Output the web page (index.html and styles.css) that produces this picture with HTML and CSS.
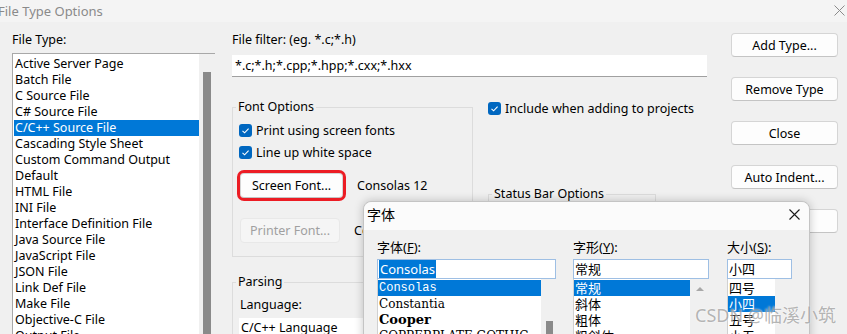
FILE: index.html
```html
<!DOCTYPE html>
<html lang="en">

<head>
    <meta charset="UTF-8">
    <title>File Type Options</title>
    <link rel="stylesheet" href="styles.css">
</head>

<body>
    <div class="window">
        <div class="titlebar">
            <span class="title">File Type Options</span>
            <svg class="close" width="11" height="11" viewBox="0 0 11 11"><path d="M0.5 0.5 L10.5 10.5 M10.5 0.5 L0.5 10.5" stroke="#8a8a8a" stroke-width="1"/></svg>
        </div>

        <div class="content">
            <div class="col-types">
                <div class="label">File Type:</div>
                <div class="listbox">
                    <ul class="items">
                        <li>Active Server Page</li>
                        <li>Batch File</li>
                        <li>C Source File</li>
                        <li>C# Source File</li>
                        <li class="selected">C/C++ Source File</li>
                        <li>Cascading Style Sheet</li>
                        <li>Custom Command Output</li>
                        <li>Default</li>
                        <li>HTML File</li>
                        <li>INI File</li>
                        <li>Interface Definition File</li>
                        <li>Java Source File</li>
                        <li>JavaScript File</li>
                        <li>JSON File</li>
                        <li>Link Def File</li>
                        <li>Make File</li>
                        <li>Objective-C File</li>
                        <li>Output File</li>
                    </ul>
                    <div class="vscroll"><div class="thumb"></div></div>
                </div>
            </div>

            <div class="col-main">
                <div class="label">File filter: (eg. *.c;*.h)</div>
                <div class="textbox">*.c;*.h;*.cpp;*.hpp;*.cxx;*.hxx</div>

                <div class="main-row">
                    <div class="left-groups">
                        <fieldset class="group font-opts">
                            <legend>Font Options</legend>
                            <div class="check"><span class="box"></span>Print using screen fonts</div>
                            <div class="check"><span class="box"></span>Line up white space</div>
                            <div class="font-row first">
                                <button class="btn marked">Screen Font...</button>
                                <span>Consolas 12</span>
                            </div>
                            <div class="font-row">
                                <button class="btn" disabled>Printer Font...</button>
                                <span>Courier New 10</span>
                            </div>
                        </fieldset>

                        <fieldset class="group parsing">
                            <legend>Parsing</legend>
                            <div class="label">Language:</div>
                            <div class="combo">C/C++ Language</div>
                        </fieldset>
                    </div>

                    <div class="right-opts">
                        <div class="check"><span class="box"></span>Include when adding to projects</div>
                        <fieldset class="group status">
                            <legend>Status Bar Options</legend>
                        </fieldset>
                    </div>
                </div>
            </div>

            <div class="col-buttons">
                <button class="btn">Add Type...</button>
                <button class="btn">Remove Type</button>
                <button class="btn">Close</button>
                <button class="btn">Auto Indent...</button>
                <button class="btn">Indent...</button>
            </div>
        </div>

        <div class="font-dialog">
            <div class="dlg-title">
                <span>字体</span>
                <svg class="dlg-close" width="11" height="11" viewBox="0 0 11 11"><path d="M0.5 0.5 L10.5 10.5 M10.5 0.5 L0.5 10.5" stroke="#1a1a1a" stroke-width="1.1"/></svg>
            </div>
            <div class="dlg-body">
                <div class="dlg-col face">
                    <div class="dlg-label">字体(<u>F</u>):</div>
                    <div class="dlg-input"><span class="sel-text">Consolas</span></div>
                    <div class="dlg-list">
                        <ul>
                            <li class="selected mono">Consolas</li>
                            <li class="serif">Constantia</li>
                            <li class="heavy">Cooper</li>
                            <li class="serif caps">COPPERPLATE GOTHIC</li>
                        </ul>
                        <div class="dlg-scroll"><div class="dlg-thumb"></div></div>
                    </div>
                </div>
                <div class="dlg-col style">
                    <div class="dlg-label">字形(<u>Y</u>):</div>
                    <div class="dlg-input">常规</div>
                    <div class="dlg-list">
                        <ul>
                            <li class="selected">常规</li>
                            <li>斜体</li>
                            <li>粗体</li>
                            <li>粗斜体</li>
                        </ul>
                        <div class="dlg-scroll"><span class="arrow-up"></span></div>
                    </div>
                </div>
                <div class="dlg-col size">
                    <div class="dlg-label">大小(<u>S</u>):</div>
                    <div class="dlg-input">小四</div>
                    <div class="dlg-list">
                        <ul>
                            <li>四号</li>
                            <li class="selected">小四</li>
                            <li>五号</li>
                            <li>小五</li>
                        </ul>
                        <div class="dlg-scroll"></div>
                    </div>
                </div>
            </div>
        </div>

        <div class="watermark">CSDN @临溪小筑</div>
    </div>
</body>

</html>
```

FILE: styles.css
```css
body {
    margin: 0;
    padding: 0;
    font-family: "Noto Sans", "Noto Sans CJK SC", sans-serif;
    font-size: 12.5px;
    color: #000;
    background: #f0f0f0;
}

.window {
    position: relative;
    width: 847px;
    height: 334px;
    overflow: hidden;
    background: #f0f0f0;
}

/* title bar */

.titlebar {
    height: 22px;
    background: #f4f4f4;
    display: flex;
    align-items: center;
    justify-content: space-between;
}

.titlebar .title {
    margin-left: -2px;
    color: #8a8a8a;
    font-size: 13px;
}

.titlebar .close {
    margin-right: 2px;
    margin-top: -2px;
}

/* main layout */

.content {
    display: flex;
    padding: 10px 9px 0 12px;
}

.label {
    height: 16px;
    line-height: 16px;
}

.col-types {
    width: 203px;
}

.listbox {
    margin-top: 5px;
    height: 290px;
    display: flex;
    background: #fff;
    border: 1px solid #a8a8a8;
    border-right: none;
}

.items {
    list-style: none;
    margin: 2px 0 0 1px;
    padding: 0;
    width: 185px;
}

.items li {
    height: 16px;
    line-height: 16px;
    padding-left: 1px;
    white-space: nowrap;
}

.items li.selected {
    background: #0078d7;
    color: #fff;
}

.vscroll {
    flex: 1;
    background: #f0f0f0;
    padding: 18px 0 0 4px;
}

.vscroll .thumb {
    width: 8px;
    height: 100%;
    background: #8a8a8a;
}

.col-main {
    width: 475px;
    margin-left: 17px;
}

.textbox {
    margin-top: 7px;
    height: 21px;
    line-height: 21px;
    padding-left: 3px;
    background: #fff;
    border-bottom: 1px solid #a0a0a0;
}

.main-row {
    display: flex;
    margin-top: 22px;
}

.left-groups {
    width: 241px;
}

.group {
    margin: 0;
    padding: 0 6px;
    border: 1px solid #dcdcdc;
    min-width: 0;
}

.group legend {
    padding: 0 2px;
    margin-left: -3px;
    line-height: 16px;
}

.font-opts {
    height: 156px;
}

.check {
    display: flex;
    align-items: center;
    height: 22px;
    white-space: nowrap;
}

.check .box {
    width: 13px;
    height: 13px;
    margin-right: 4px;
    border-radius: 3px;
    background: #0067c0 url("data:image/svg+xml,%3Csvg xmlns='http://www.w3.org/2000/svg' width='13' height='13'%3E%3Cpath d='M3.5 6.8 L5.6 8.8 L9.6 4.6' fill='none' stroke='white' stroke-width='1.1'/%3E%3C/svg%3E");
}

.font-opts .check:first-of-type {
    margin-top: 4px;
}

.font-row {
    display: flex;
    align-items: center;
    margin-top: 20px;
    white-space: nowrap;
}

.font-row.first {
    margin-top: 10px;
}

.font-row span {
    margin-left: 14px;
}

.btn {
    font-family: inherit;
    font-size: 12.5px;
    color: #000;
    background: #fdfdfd;
    border: 1px solid #d5d5d5;
    border-bottom-color: #c4c4c4;
    border-radius: 4px;
    padding: 0;
}

.font-row .btn {
    width: 100px;
    height: 25px;
    margin-left: 1px;
}

.btn:disabled {
    color: #a0a0a0;
    background: #f5f5f5;
    border-color: #e8e8e8;
}

.btn.marked {
    outline: 3px solid #ec1c24;
    outline-offset: 0;
    width: 103px;
    border-radius: 4px;
}

.parsing {
    margin-top: 17px;
    height: 80px;
    width: 300px;
}

.parsing .label {
    margin-top: 7px;
    padding-left: 1px;
}

.parsing .combo {
    margin-top: 5px;
    height: 20px;
    line-height: 20px;
    padding-left: 2px;
    background: #fff;
}

.right-opts {
    margin-left: 15px;
    flex: 1;
}

.right-opts .check {
    height: 18px;
}

.status {
    margin-top: 69px;
    width: 154px;
    height: 80px;
}

.col-buttons {
    width: 107px;
    margin-left: 24px;
    padding-top: 1px;
    display: flex;
    flex-direction: column;
    gap: 20px;
}

.col-buttons .btn {
    height: 24px;
}

/* font dialog */

.font-dialog {
    position: absolute;
    left: 363px;
    top: 201px;
    width: 445px;
    height: 150px;
    background: #f0f0f0;
    border: 1px solid #c4c4c4;
    border-radius: 8px 8px 0 0;
    box-shadow: 0 0 10px rgba(0, 0, 0, 0.22);
    font-family: "Noto Sans", "Noto Sans CJK SC", sans-serif;
}

.dlg-title {
    height: 28px;
    background: #fbfbfb;
    border-radius: 8px 8px 0 0;
    display: flex;
    align-items: center;
    justify-content: space-between;
    padding: 0 9px 0 3px;
    font-size: 14px;
}

.dlg-title span {
    margin-top: -5px;
}

.dlg-close {
    margin-top: -3px;
}

.dlg-body {
    display: flex;
    padding: 9px 0 0 13px;
}

.dlg-col.face {
    width: 179px;
}

.dlg-col.style {
    width: 136px;
    margin-left: 17px;
}

.dlg-col.size {
    width: 65px;
    margin-left: 18px;
}

.dlg-label {
    height: 16px;
    line-height: 16px;
    font-size: 13px;
    white-space: nowrap;
}

.dlg-input {
    margin-top: 4px;
    height: 18px;
    line-height: 18px;
    padding-left: 1px;
    background: #fff;
    border: 1px solid #9ebfe4;
    font-size: 13px;
}

.sel-text {
    background: #0078d7;
    color: #fff;
    padding: 0 1px;
}

.dlg-list {
    display: flex;
    height: 80px;
    background: #fff;
    border-left: 1px solid #d0d0d0;
}

.dlg-list ul {
    list-style: none;
    margin: 1px 0 0 0;
    padding: 0;
    flex: 1;
}

.dlg-list li {
    height: 16px;
    line-height: 16px;
    padding-left: 1px;
    font-size: 13px;
    white-space: nowrap;
    overflow: hidden;
}

.dlg-list li.selected {
    background: #0078d7;
    color: #fff;
}

.dlg-list li.mono {
    font-family: "Liberation Mono", monospace;
    font-size: 12px;
}

.dlg-list li.serif {
    font-family: "DejaVu Serif", serif;
    font-size: 12px;
}

.dlg-list li.heavy {
    font-family: "DejaVu Serif", serif;
    font-weight: bold;
    font-size: 13px;
}

.dlg-scroll {
    width: 17px;
    background: #f0f0f0;
    position: relative;
}

.face .dlg-scroll {
    width: 15px;
}

.dlg-thumb {
    position: absolute;
    left: 5px;
    top: 42px;
    width: 7px;
    height: 60px;
    background: #8a8a8a;
}

.style .dlg-scroll {
    width: 19px;
}

.arrow-up {
    position: absolute;
    left: 6px;
    top: 8px;
    width: 0;
    height: 0;
    border-left: 4px solid transparent;
    border-right: 4px solid transparent;
    border-bottom: 4px solid #a8a8a8;
}

.size .dlg-list ul {
    flex: none;
    width: 47px;
}

.size .dlg-scroll {
    flex: 1;
}

.watermark {
    position: absolute;
    left: 695px;
    top: 303px;
    font-family: "Noto Sans", "Noto Sans CJK SC", sans-serif;
    font-size: 18px;
    line-height: 24px;
    color: rgba(120, 120, 120, 0.55);
    text-shadow: 0 0 2px rgba(255, 255, 255, 0.9);
    white-space: nowrap;
}
```
